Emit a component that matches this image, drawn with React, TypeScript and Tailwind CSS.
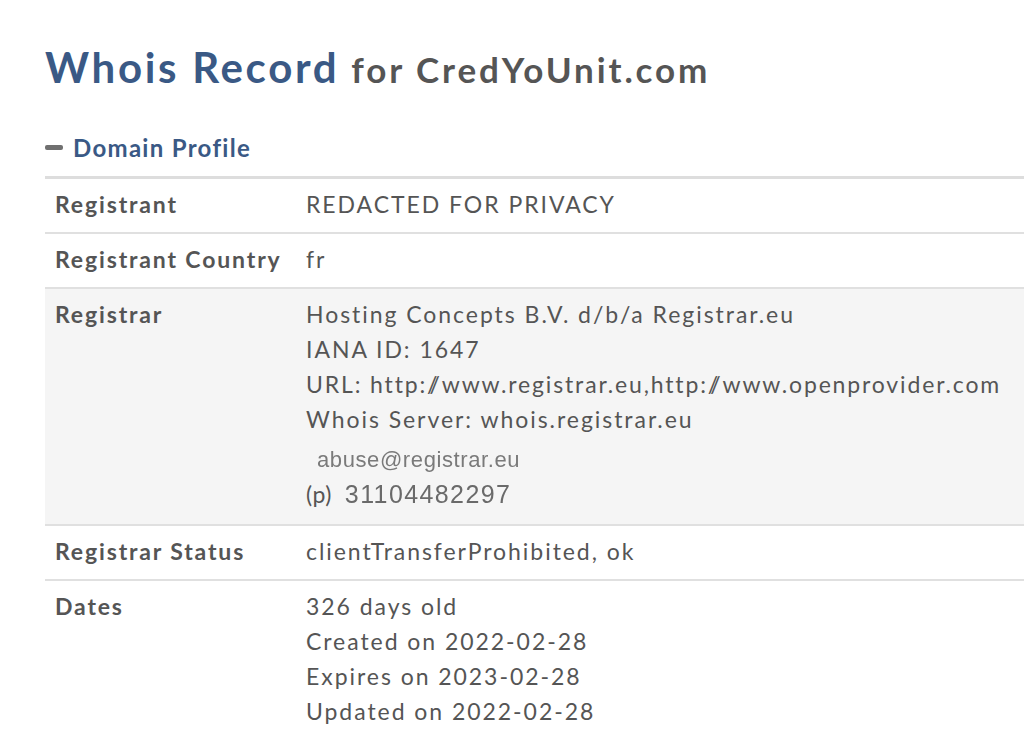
import React from "react";

export default function App() {
  const font = { fontFamily: "Lato, 'Open Sans', sans-serif" };
  const imgFont = { fontFamily: "'Liberation Sans', Arial, sans-serif", filter: "blur(0.45px)" };
  return (
    <div className="w-[1024px] h-[737px] overflow-hidden bg-white" style={font}>
      <div className="pl-[45px] pt-[36px]">
        <h1 className="flex items-baseline whitespace-nowrap">
          <span className="text-[42px] font-bold text-[#3a5985] tracking-[2.7px]">Whois Record</span>
          <span className="ml-[12px] text-[35px] font-bold text-[#555555] tracking-[2.9px]">for CredYoUnit.com</span>
        </h1>
        <div className="mt-[32px] flex items-center">
          <span className="block w-[18px] h-[5px] rounded-[2px] bg-[#707070] mr-[10px]"></span>
          <span className="text-[24px] leading-[33px] font-bold text-[#3a5985] tracking-[1.3px]">Domain Profile</span>
        </div>
        <div className="mt-[12px] border-t-[3px] border-[#dddddd] w-[1000px]">
          <Row label="Registrant">
            <div>REDACTED FOR PRIVACY</div>
          </Row>
          <Row label="Registrant Country">
            <div>fr</div>
          </Row>
          <Row label="Registrar" shaded pb="pb-[12px]">
            <div>Hosting Concepts B.V. d/b/a Registrar.eu</div>
            <div>IANA ID: 1647</div>
            <div className="tracking-[1.85px]">
              URL: http:<span className="tracking-[-8px]">/</span>/www.registrar.eu,http:
              <span className="tracking-[-8px]">/</span>/www.openprovider.com
            </div>
            <div>Whois Server: whois.registrar.eu</div>
            <div
              className="mt-[6px] pl-[11px] text-[22px] leading-[34px] text-[#7a7a7a] tracking-[0.6px]"
              style={imgFont}
            >
              abuse@registrar.eu
            </div>
            <div className="flex items-baseline">
              <span className="tracking-[0.5px]">(p)</span>
              <span className="ml-[13px] text-[25px] text-[#6a6a6a] tracking-[1.4px]" style={imgFont}>
                31104482297
              </span>
            </div>
          </Row>
          <Row label="Registrar Status">
            <div>clientTransferProhibited, ok</div>
          </Row>
          <Row label="Dates" last>
            <div>326 days old</div>
            <div>Created on 2022-02-28</div>
            <div>Expires on 2023-02-28</div>
            <div>Updated on 2022-02-28</div>
          </Row>
        </div>
      </div>
    </div>
  );
}

function Row({
  label,
  children,
  shaded,
  last,
  pb,
}: {
  label: string;
  children: React.ReactNode;
  shaded?: boolean;
  last?: boolean;
  pb?: string;
}) {
  return (
    <div
      className={
        "flex pt-[8px] " +
        (pb ? pb : "pb-[10px]") +
        " " +
        (shaded ? "bg-[#f5f5f5] " : "bg-white ") +
        (last ? "" : "border-b-[2px] border-[#e0e0e0]")
      }
    >
      <div className="w-[261px] shrink-0 pl-[10px] text-[23px] leading-[35px] font-bold text-[#555555] tracking-[1.85px] whitespace-nowrap">
        {label}
      </div>
      <div className="text-[23px] leading-[35px] text-[#555555] tracking-[1.95px] whitespace-nowrap">{children}</div>
    </div>
  );
}
